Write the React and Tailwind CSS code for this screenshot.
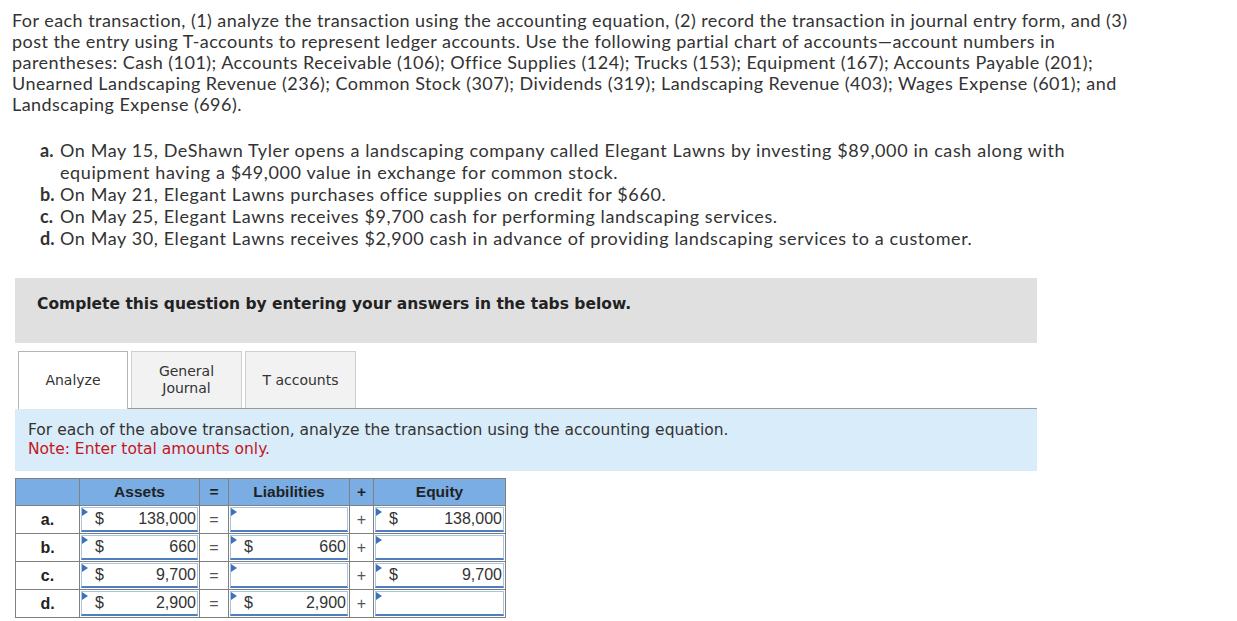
import React from 'react';

const rows = [
  { label: 'a.', assets: '138,000', liab: null, equity: '138,000' },
  { label: 'b.', assets: '660', liab: '660', equity: null },
  { label: 'c.', assets: '9,700', liab: null, equity: '9,700' },
  { label: 'd.', assets: '2,900', liab: '2,900', equity: null },
];

function Field({ value }) {
  return (
    <div className="relative h-[25px] bg-white border border-[#a9c3e3] border-b-2 border-b-[#4f7fc0] flex items-center pl-[13px] pr-[1px] text-[16px] text-[#333]">
      <span className="absolute left-0 top-0 w-0 h-0 border-l-[6px] border-l-[#3b72b9] border-y-[4px] border-y-transparent" />
      {value && (
        <>
          <span>$</span>
          <span className="ml-auto">{value}</span>
        </>
      )}
    </div>
  );
}

function Tab({ active, children }) {
  return (
    <div
      className={`flex items-center justify-center text-center leading-[17px] text-[14px] text-[#333] border-t border-x ${
        active ? 'w-[110px] h-[58px] bg-white border-[#b4b4b4]' : 'w-[111px] h-[57px] bg-[#f2f2f2] border-[#cfcfcf]'
      }`}
    >
      {children}
    </div>
  );
}

export default function App() {
  return (
    <div className="min-h-screen bg-white px-3 pt-[10px] pb-4">
      <div className="font-['Lato',sans-serif] text-[18px] tracking-[0.45px] leading-[21px] text-[#333]">
        <p>
          For each transaction, (1) analyze the transaction using the accounting equation, (2) record the transaction in journal entry form, and (3)
          <br />
          post the entry using T-accounts to represent ledger accounts. Use the following partial chart of accounts—account numbers in
          <br />
          parentheses: Cash (101); Accounts Receivable (106); Office Supplies (124); Trucks (153); Equipment (167); Accounts Payable (201);
          <br />
          Unearned Landscaping Revenue (236); Common Stock (307); Dividends (319); Landscaping Revenue (403); Wages Expense (601); and
          <br />
          Landscaping Expense (696).
        </p>

        <ul className="mt-[24px] ml-[28px] leading-[22px] tracking-[0.6px]">
          <li className="flex">
            <b className="w-[20px] shrink-0 tracking-normal">a.</b>
            <span>
              On May 15, DeShawn Tyler opens a landscaping company called Elegant Lawns by investing $89,000 in cash along with
              <br />
              equipment having a $49,000 value in exchange for common stock.
            </span>
          </li>
          <li className="flex">
            <b className="w-[20px] shrink-0 tracking-normal">b.</b>
            <span>On May 21, Elegant Lawns purchases office supplies on credit for $660.</span>
          </li>
          <li className="flex">
            <b className="w-[20px] shrink-0 tracking-normal">c.</b>
            <span>On May 25, Elegant Lawns receives $9,700 cash for performing landscaping services.</span>
          </li>
          <li className="flex">
            <b className="w-[20px] shrink-0 tracking-normal">d.</b>
            <span>On May 30, Elegant Lawns receives $2,900 cash in advance of providing landscaping services to a customer.</span>
          </li>
        </ul>
      </div>

      <div className="ml-[3px] w-[1022px] font-['DejaVu_Sans',sans-serif]">
        <div className="mt-[29px] h-[65px] bg-[#e0e0e0] pt-[17px] pl-[22px]">
          <p className="font-bold text-[15.5px] leading-[18px] text-[#222]">Complete this question by entering your answers in the tabs below.</p>
        </div>

        <div className="mt-2 flex items-end">
          <div className="w-[3px]" />
          <Tab active>Analyze</Tab>
          <div className="flex-1 flex gap-[3px] pl-[3px] border-b border-[#999]">
            <Tab>
              General
              <br />
              Journal
            </Tab>
            <Tab>T accounts</Tab>
          </div>
        </div>

        <div className="bg-[#d9ecfa] px-[13px] pt-3 pb-3 text-[15.5px] leading-[19px]">
          <p className="text-[#333]">For each of the above transaction, analyze the transaction using the accounting equation.</p>
          <p className="text-[#c4161c]">Note: Enter total amounts only.</p>
        </div>

        <table className="mt-[7px] border-collapse font-['Liberation_Sans',sans-serif] text-[16px] text-[#333]">
          <colgroup>
            <col className="w-[64px]" />
            <col className="w-[120px]" />
            <col className="w-[29px]" />
            <col className="w-[121px]" />
            <col className="w-[24px]" />
            <col className="w-[132px]" />
          </colgroup>
          <thead>
            <tr className="h-[27px] bg-[#79ade4] text-[15.5px] font-bold text-[#222]">
              <th className="border border-[#808080]"></th>
              <th className="border border-[#808080]">Assets</th>
              <th className="border border-[#808080]">=</th>
              <th className="border border-[#808080]">Liabilities</th>
              <th className="border border-[#808080]">+</th>
              <th className="border border-[#808080]">Equity</th>
            </tr>
          </thead>
          <tbody>
            {rows.map((r) => (
              <tr key={r.label} className="h-[28px]">
                <td className="border border-[#808080] text-center font-bold text-[#222]">{r.label}</td>
                <td className="border border-[#808080] p-[1px]">
                  <Field value={r.assets} />
                </td>
                <td className="border border-[#808080] text-center text-[#555]">=</td>
                <td className="border border-[#808080] p-[1px]">
                  <Field value={r.liab} />
                </td>
                <td className="border border-[#808080] text-center text-[#555]">+</td>
                <td className="border border-[#808080] p-[1px]">
                  <Field value={r.equity} />
                </td>
              </tr>
            ))}
          </tbody>
        </table>
      </div>
    </div>
  );
}
